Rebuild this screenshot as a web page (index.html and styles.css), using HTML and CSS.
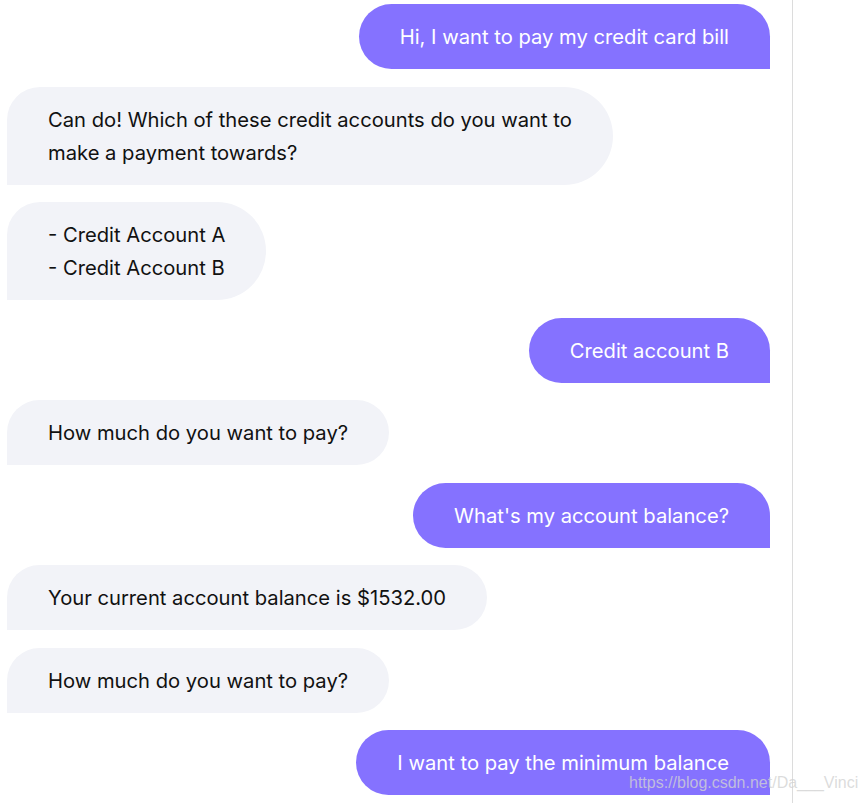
FILE: index.html
```html
<!DOCTYPE html>
<html>
<head>
<meta charset="utf-8">
<link rel="stylesheet" href="styles.css">
</head>
<body>
<div class="page">
  <div class="chat">
    <div class="msg user">Hi, I want to pay my credit card bill</div>
    <div class="msg bot multi">Can do! Which of these credit accounts do you want to<br>make a payment towards?</div>
    <div class="msg bot multi">- Credit Account A<br>- Credit Account B</div>
    <div class="msg user">Credit account B</div>
    <div class="msg bot">How much do you want to pay?</div>
    <div class="msg user">What's my account balance?</div>
    <div class="msg bot">Your current account balance is $1532.00</div>
    <div class="msg bot">How much do you want to pay?</div>
    <div class="msg user">I want to pay the minimum balance</div>
  </div>
  <div class="side"></div>
</div>
<div class="watermark">https://blog.csdn.net/Da___Vinci</div>
</body>
</html>
```
FILE: styles.css
```css
html, body {
  margin: 0;
  padding: 0;
  background: #ffffff;
  height: 803px;
  overflow: hidden;
}
.page {
  display: flex;
  height: 803px;
}
.chat {
  width: 763px;
  padding: 4px 22px 0 7px;
  border-right: 1px solid #dcdcdc;
  display: flex;
  flex-direction: column;
  gap: 17.5px;
  font-family: "Inter", "Liberation Sans", sans-serif;
  font-size: 20.2px;
  line-height: 33px;
}
.side {
  flex: 1;
}
.msg {
  padding: 16px 41px;
  border-radius: 32.5px;
  white-space: nowrap;
}
.user {
  align-self: flex-end;
  background: #8572ff;
  color: #ffffff;
  border-bottom-right-radius: 0;
}
.bot {
  align-self: flex-start;
  background: #f2f3f8;
  color: #111111;
  border-bottom-left-radius: 0;
}
.bot.multi {
  border-radius: 33px 49px 49px 0;
}
.watermark {
  position: absolute;
  left: 629px;
  top: 773px;
  font-family: "Liberation Sans", Arial, sans-serif;
  font-size: 16px;
  line-height: 20px;
  color: rgba(210, 210, 210, 0.78);
}
```
